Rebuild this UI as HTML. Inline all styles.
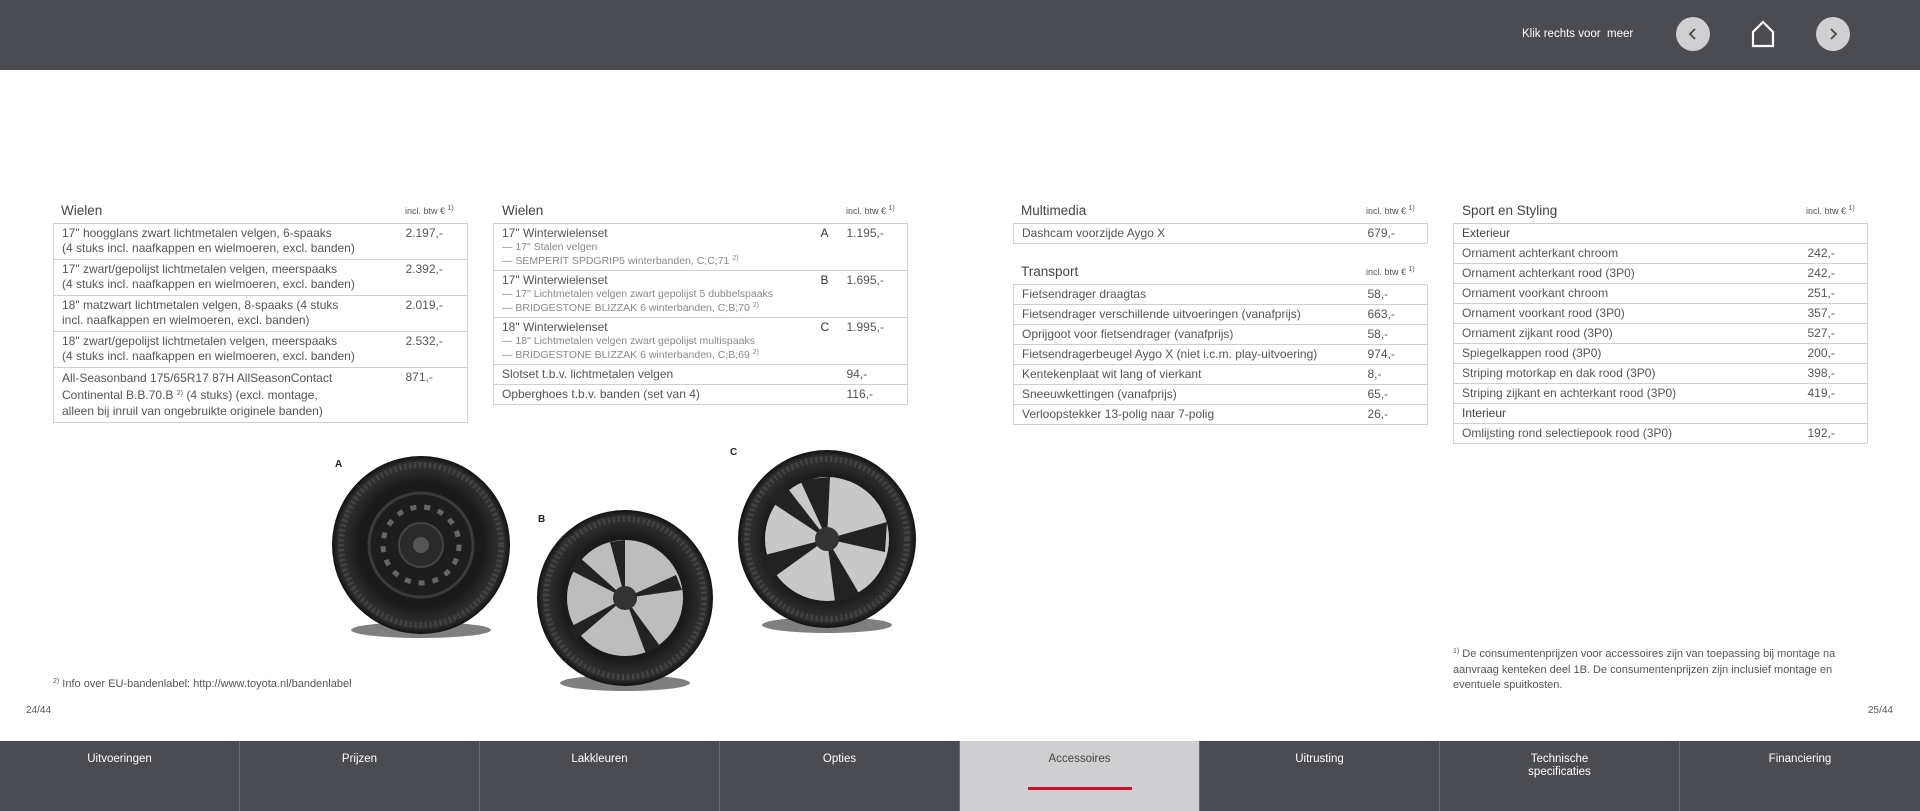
<!DOCTYPE html>
<html><head><meta charset="utf-8">
<style>
*{margin:0;padding:0;box-sizing:border-box}
body{width:1920px;height:811px;position:relative;background:#fff;font-family:"Liberation Sans",sans-serif;color:#555;overflow:hidden}
.hdr{position:absolute;left:0;top:0;width:1920px;height:70px;background:#4b4c51}
.abs{position:absolute}
.ttl{position:absolute;font-size:13.5px;color:#444}
.inc{position:absolute;font-size:9px;color:#555}
table{position:absolute;border-collapse:collapse;font-size:12px;line-height:15px;table-layout:fixed}
td{border:1.5px solid #cfcfcf;border-left:none;border-right:none;padding:2px 8px;vertical-align:top}
table{border:1.5px solid #cfcfcf}
td.p{padding-left:0;padding-right:0}
.s{font-size:10.5px;color:#888;line-height:13.5px}
sup{font-size:7px;line-height:0;vertical-align:4px}
.nav{position:absolute;top:741px;left:0;width:1920px;height:70px;background:#4b4c51;display:flex}
.nav div{width:240px;border-right:1px solid #6a6b70;color:#fff;font-size:11.5px;text-align:center;padding-top:12px;line-height:13px}
.nav div.act{background:#cfcfd1;color:#444;position:relative}
.circ{position:absolute;width:34px;height:34px;border-radius:50%;background:#d0d0d2;top:17px}
</style></head><body>
<div class="hdr">
<div class="abs" style="left:1522px;top:28px;color:#fff;font-size:11.5px">Klik rechts voor&nbsp; meer</div>
<div class="circ" style="left:1676px"><svg width="34" height="34"><path d="M19 12 L14 17 L19 22" stroke="#444" stroke-width="1.8" fill="none"/></svg></div>
<svg class="abs" style="left:1751px;top:20px" width="24" height="28"><path d="M2 26 V12 L12 2 L22 12 V26 Z" stroke="#fff" stroke-width="2.2" fill="none"/></svg>
<div class="circ" style="left:1816px"><svg width="34" height="34"><path d="M15 12 L20 17 L15 22" stroke="#444" stroke-width="1.8" fill="none"/></svg></div>
</div>

<div class="ttl" style="left:61px;top:203px">Wielen</div><div class="inc" style="left:405px;top:206px">incl. btw € <sup>1)</sup></div>
<table style="left:53px;top:223px;width:415px">
<colgroup><col style="width:352px"><col></colgroup>
<tr style="height:36px"><td>17" hoogglans zwart lichtmetalen velgen, 6-spaaks<br>(4 stuks incl. naafkappen en wielmoeren, excl. banden)</td><td class="p">2.197,-</td></tr>
<tr style="height:36px"><td>17" zwart/gepolijst lichtmetalen velgen, meerspaaks<br>(4 stuks incl. naafkappen en wielmoeren, excl. banden)</td><td class="p">2.392,-</td></tr>
<tr style="height:36px"><td>18" matzwart lichtmetalen velgen, 8-spaaks (4 stuks<br>incl. naafkappen en wielmoeren, excl. banden)</td><td class="p">2.019,-</td></tr>
<tr style="height:36px"><td>18" zwart/gepolijst lichtmetalen velgen, meerspaaks<br>(4 stuks incl. naafkappen en wielmoeren, excl. banden)</td><td class="p">2.532,-</td></tr>
<tr style="height:54px"><td style="line-height:16.5px">All-Seasonband 175/65R17 87H AllSeasonContact<br>Continental B.B.70.B <sup>2)</sup> (4 stuks) (excl. montage,<br>alleen bij inruil van ongebruikte originele banden)</td><td class="p">871,-</td></tr>
</table>

<div class="ttl" style="left:502px;top:203px">Wielen</div><div class="inc" style="left:846px;top:206px">incl. btw € <sup>1)</sup></div>
<table style="left:493px;top:223px;width:415px">
<colgroup><col style="width:327px"><col style="width:26px"><col></colgroup>
<tr style="height:47px"><td>17" Winterwielenset<div class="s">— 17" Stalen velgen<br>— SEMPERIT SPDGRIP5 winterbanden, C;C;71 <sup>2)</sup></div></td><td class="p" style="color:#333">A</td><td class="p">1.195,-</td></tr>
<tr style="height:47px"><td>17" Winterwielenset<div class="s">— 17" Lichtmetalen velgen zwart gepolijst 5 dubbelspaaks<br>— BRIDGESTONE BLIZZAK 6 winterbanden, C;B;70 <sup>2)</sup></div></td><td class="p" style="color:#333">B</td><td class="p">1.695,-</td></tr>
<tr style="height:47px"><td>18" Winterwielenset<div class="s">— 18" Lichtmetalen velgen zwart gepolijst multispaaks<br>— BRIDGESTONE BLIZZAK 6 winterbanden, C;B;69 <sup>2)</sup></div></td><td class="p" style="color:#333">C</td><td class="p">1.995,-</td></tr>
<tr style="height:20px"><td colspan="2">Slotset t.b.v. lichtmetalen velgen</td><td class="p">94,-</td></tr>
<tr style="height:20px"><td colspan="2">Opberghoes t.b.v. banden (set van 4)</td><td class="p">116,-</td></tr>
</table>

<div class="ttl" style="left:1021px;top:203px">Multimedia</div><div class="inc" style="left:1366px;top:206px">incl. btw € <sup>1)</sup></div>
<table style="left:1013px;top:223px;width:415px">
<colgroup><col style="width:354px"><col></colgroup>
<tr style="height:20px"><td>Dashcam voorzijde Aygo X</td><td class="p">679,-</td></tr>
</table>
<div class="ttl" style="left:1021px;top:264px">Transport</div><div class="inc" style="left:1366px;top:267px">incl. btw € <sup>1)</sup></div>
<table style="left:1013px;top:284px;width:415px">
<colgroup><col style="width:354px"><col></colgroup>
<tr style="height:19px"><td>Fietsendrager draagtas</td><td class="p">58,-</td></tr>
<tr style="height:19px"><td>Fietsendrager verschillende uitvoeringen (vanafprijs)</td><td class="p">663,-</td></tr>
<tr style="height:19px"><td>Oprijgoot voor fietsendrager (vanafprijs)</td><td class="p">58,-</td></tr>
<tr style="height:19px"><td>Fietsendragerbeugel Aygo X (niet i.c.m. play-uitvoering)</td><td class="p">974,-</td></tr>
<tr style="height:19px"><td>Kentekenplaat wit lang of vierkant</td><td class="p">8,-</td></tr>
<tr style="height:19px"><td>Sneeuwkettingen (vanafprijs)</td><td class="p">65,-</td></tr>
<tr style="height:19px"><td>Verloopstekker 13-polig naar 7-polig</td><td class="p">26,-</td></tr>
</table>

<div class="ttl" style="left:1462px;top:203px">Sport en Styling</div><div class="inc" style="left:1806px;top:206px">incl. btw € <sup>1)</sup></div>
<table style="left:1453px;top:223px;width:415px">
<colgroup><col style="width:354px"><col></colgroup>
<tr style="height:19px"><td colspan="2" style="color:#444">Exterieur</td></tr>
<tr style="height:19px"><td>Ornament achterkant chroom</td><td class="p">242,-</td></tr>
<tr style="height:19px"><td>Ornament achterkant rood (3P0)</td><td class="p">242,-</td></tr>
<tr style="height:19px"><td>Ornament voorkant chroom</td><td class="p">251,-</td></tr>
<tr style="height:19px"><td>Ornament voorkant rood (3P0)</td><td class="p">357,-</td></tr>
<tr style="height:19px"><td>Ornament zijkant rood (3P0)</td><td class="p">527,-</td></tr>
<tr style="height:19px"><td>Spiegelkappen rood (3P0)</td><td class="p">200,-</td></tr>
<tr style="height:19px"><td>Striping motorkap en dak rood (3P0)</td><td class="p">398,-</td></tr>
<tr style="height:19px"><td>Striping zijkant en achterkant rood (3P0)</td><td class="p">419,-</td></tr>
<tr style="height:19px"><td colspan="2" style="color:#444">Interieur</td></tr>
<tr style="height:19px"><td>Omlijsting rond selectiepook rood (3P0)</td><td class="p">192,-</td></tr>
</table>

<svg class="abs" style="left:300px;top:440px" width="650" height="270">
<defs>
<radialGradient id="tyre"><stop offset="0.7" stop-color="#1a1a1a"/><stop offset="0.92" stop-color="#333"/><stop offset="1" stop-color="#111"/></radialGradient>
</defs>
<ellipse cx="121" cy="190" rx="70" ry="8" fill="#000" opacity="0.5"/>
<circle cx="121" cy="105" r="89" fill="url(#tyre)"/>
<circle cx="121" cy="105" r="80" fill="none" stroke="#444" stroke-width="6" stroke-dasharray="2 3"/>
<circle cx="121" cy="105" r="52" fill="#1d1d1d" stroke="#3a3a3a" stroke-width="3"/>
<circle cx="121" cy="105" r="38" fill="none" stroke="#666" stroke-width="5" stroke-dasharray="6 8"/>
<circle cx="121" cy="105" r="22" fill="#2a2a2a" stroke="#444" stroke-width="2"/>
<circle cx="121" cy="105" r="8" fill="#555"/>
<ellipse cx="325" cy="243" rx="65" ry="8" fill="#000" opacity="0.5"/>
<circle cx="325" cy="158" r="88" fill="url(#tyre)"/>
<circle cx="325" cy="158" r="79" fill="none" stroke="#444" stroke-width="6" stroke-dasharray="2 3"/>
<circle cx="325" cy="158" r="58" fill="#bdbdbd"/>
<g fill="#222">
<path d="M325 158 L310 102 L325 100Z"/><path d="M325 158 L376 135 L382 150Z"/><path d="M325 158 L360 206 L346 214Z"/><path d="M325 158 L276 200 L268 188Z"/><path d="M325 158 L270 130 L278 116Z"/>
</g>
<circle cx="325" cy="158" r="12" fill="#333"/>
<ellipse cx="527" cy="185" rx="65" ry="8" fill="#000" opacity="0.5"/>
<circle cx="527" cy="99" r="89" fill="url(#tyre)"/>
<circle cx="527" cy="99" r="80" fill="none" stroke="#444" stroke-width="6" stroke-dasharray="2 3"/>
<circle cx="527" cy="99" r="62" fill="#c8c8c8"/>
<g fill="#222">
<path d="M527 99 L500 40 L530 37Z"/><path d="M527 99 L587 82 L585 112Z"/><path d="M527 99 L560 155 L535 162Z"/><path d="M527 99 L470 140 L465 115Z"/><path d="M527 99 L468 60 L485 45Z"/>
</g>
<circle cx="527" cy="99" r="12" fill="#333"/>
<text x="35" y="27" font-family="Liberation Sans" font-size="10" font-weight="bold" fill="#222">A</text>
<text x="238" y="82" font-family="Liberation Sans" font-size="10" font-weight="bold" fill="#222">B</text>
<text x="430" y="15" font-family="Liberation Sans" font-size="10" font-weight="bold" fill="#222">C</text>
</svg>

<div class="abs" style="left:53px;top:678px;font-size:11px"><sup>2)</sup> Info over EU-bandenlabel: http://www.toyota.nl/bandenlabel</div>
<div class="abs" style="left:1453px;top:647px;font-size:11px;line-height:15.5px;width:420px"><sup>1)</sup> De consumentenprijzen voor accessoires zijn van toepassing bij montage na aanvraag kenteken deel 1B. De consumentenprijzen zijn inclusief montage en eventuele spuitkosten.</div>
<div class="abs" style="left:26px;top:705px;font-size:10px">24/44</div>
<div class="abs" style="right:27px;top:705px;font-size:10px">25/44</div>

<div class="nav">
<div>Uitvoeringen</div><div>Prijzen</div><div>Lakkleuren</div><div>Opties</div>
<div class="act">Accessoires<span style="position:absolute;left:68px;top:46px;width:104px;height:3px;background:#d0102a"></span></div>
<div>Uitrusting</div><div>Technische<br>specificaties</div><div style="border:none">Financiering</div>
</div>
</body></html>
